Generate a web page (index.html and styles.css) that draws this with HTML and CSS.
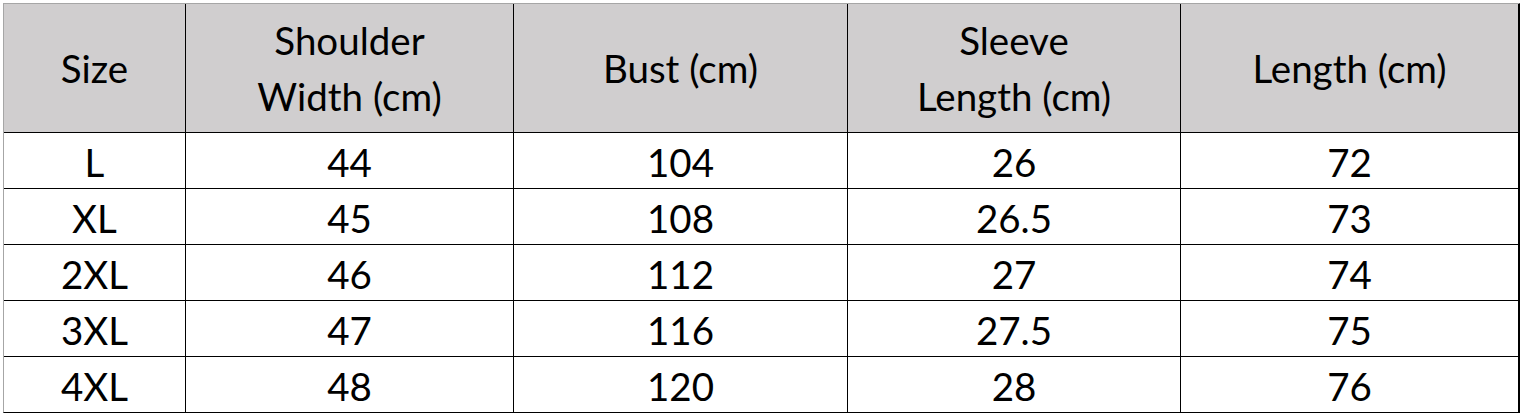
FILE: index.html
```html
<!DOCTYPE html>
<html>
<head>
<meta charset="utf-8">
<link rel="stylesheet" href="styles.css">
</head>
<body>
<div class="sheet">
  <div class="cell head">Size</div>
  <div class="cell head">Shoulder<br>Width (cm)</div>
  <div class="cell head">Bust (cm)</div>
  <div class="cell head">Sleeve<br>Length (cm)</div>
  <div class="cell head">Length (cm)</div>

  <div class="cell">L</div><div class="cell">44</div><div class="cell">104</div><div class="cell">26</div><div class="cell">72</div>
  <div class="cell">XL</div><div class="cell">45</div><div class="cell">108</div><div class="cell">26.5</div><div class="cell">73</div>
  <div class="cell">2XL</div><div class="cell">46</div><div class="cell">112</div><div class="cell">27</div><div class="cell">74</div>
  <div class="cell">3XL</div><div class="cell">47</div><div class="cell">116</div><div class="cell">27.5</div><div class="cell">75</div>
  <div class="cell">4XL</div><div class="cell">48</div><div class="cell">120</div><div class="cell">28</div><div class="cell">76</div>
</div>
</body>
</html>
```
FILE: styles.css
```css
html, body {
  margin: 0;
  padding: 0;
  background: #ffffff;
}
body {
  padding: 3px 0 0 3px;
  font-family: Lato, "Liberation Sans", sans-serif;
}
.sheet {
  display: grid;
  grid-template-columns: 181px 327px 333px 332px 337px;
  grid-template-rows: 128px repeat(5, 55px);
  gap: 1px;
  width: 1515px;
  background: #000;
  border-top: 1px solid #a6a6a6;
  border-left: 1px solid #a6a6a6;
  border-right: 1px solid #000;
  border-bottom: 1px solid #000;
}
.cell {
  background: #fff;
  color: #000;
  display: flex;
  align-items: center;
  justify-content: center;
  text-align: center;
  font-size: 38.5px;
  line-height: 56px;
  padding-top: 2px;
}
.head {
  background: #d0cecf;
  padding-top: 0;
}
```
